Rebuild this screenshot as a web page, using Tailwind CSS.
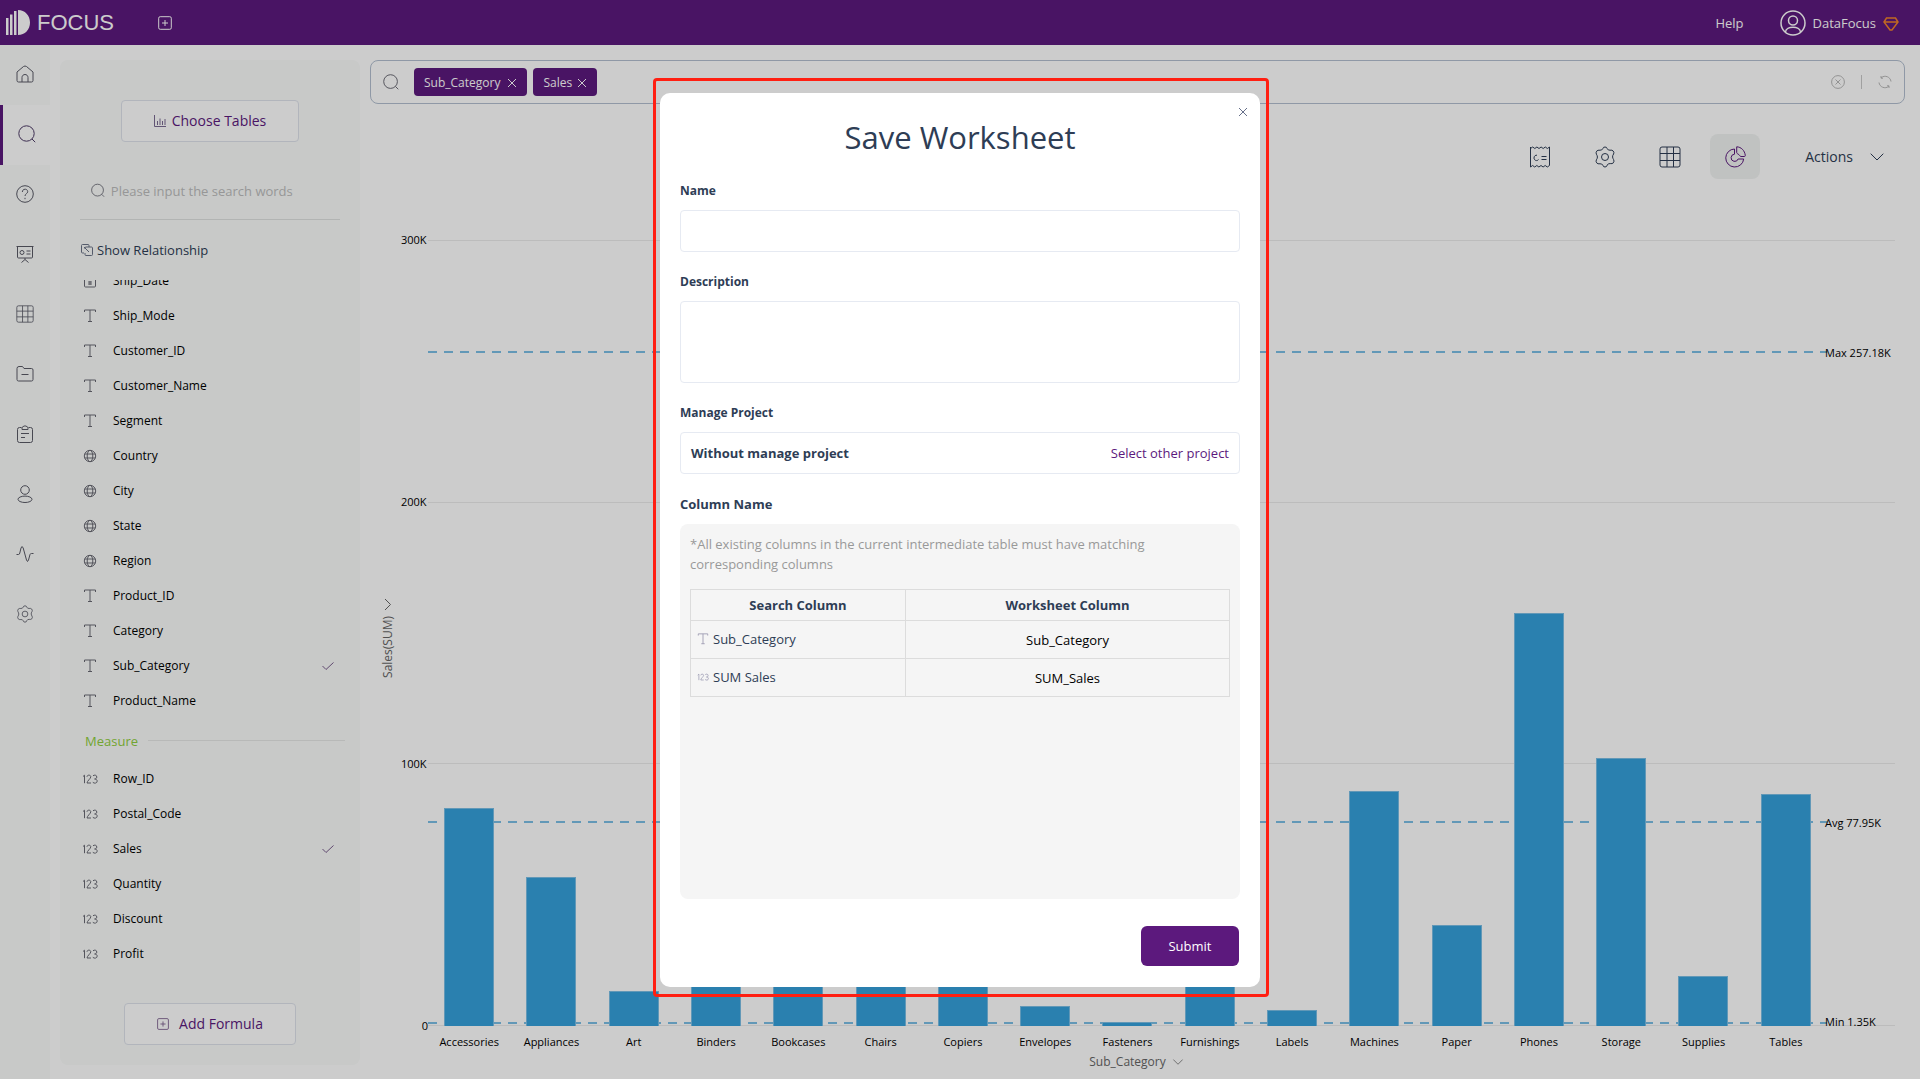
<!DOCTYPE html>
<html lang="en">
<head>
<meta charset="utf-8">
<title>DataFocus</title>
<script src="https://cdn.jsdelivr.net/npm/@tailwindcss/browser@4"></script>
</head>
<body class="min-h-screen flex flex-col bg-white text-[13px] leading-5 text-black font-['Open_Sans','Noto_Sans',sans-serif]">

<svg class="hidden" aria-hidden="true">
  <symbol id="search" viewBox="0 0 18 18"><circle cx="8.5" cy="8.5" r="7.7"/><path d="M14 14l3.2 3.2"/></symbol>
  <symbol id="text" viewBox="0 0 14 14"><path d="M1.500 3V1h11v2M7 1v11.500M5 12.500h4"/></symbol>
  <symbol id="globe" viewBox="0 0 14 14"><circle cx="7" cy="7" r="5.700"/><ellipse cx="7" cy="7" rx="2.800" ry="5.700"/><path d="M1.800 5h10.400M1.800 9h10.400"/></symbol>
  <symbol id="calendar" viewBox="0 0 14 14"><rect x="1.500" y="2.500" width="11" height="10.500" rx="1"/><path d="M4 .5v3M10 .5v3M5 8h4M5 10h4M7 7v4"/></symbol>
  <symbol id="number" viewBox="0 0 16 10"><path d="M1 2.500l1.500-1.300v8M5 2.800c0-2.200 3.800-2.200 3.800 0C8.800 4.500 5 7 5 9h4M11 1.800c1.200-1.200 3.800-.8 3.800 1.200 0 1.500-1.200 2-2.200 2 1.200 0 2.600.6 2.600 2.100 0 2.200-3 2.700-4.400 1.200"/></symbol>
  <symbol id="check" viewBox="0 0 12 8"><path d="M.5 4l3.500 3.500L11.500.5"/></symbol>
  <symbol id="plus" viewBox="0 0 14 14"><rect x=".7" y=".7" width="12.600" height="12.600" rx="1.500"/><path d="M7 4v6M4 7h6"/></symbol>
  <symbol id="gear" viewBox="0 0 22 22"><circle cx="11" cy="11" r="3.500"/><path d="M8.800 2.600Q9.200 1 11 1t2.200 1.600q.8 1.900 2.800 1.600 2.200-.4 3.200.8 1.200 1.600.4 3-1.200 1.600-1 3 .1 1.200 1 2.600.9 1.600-.2 3.200-1.200 1.200-3.200.8-2.200-.3-2.900 1.400Q12.800 21 11 21t-2.200-1.800Q8 17.500 6 17.800q-2.300.4-3.300-.9-1.100-1.500-.3-3.100 1.100-1.500 1-2.800 0-1.300-1-2.800-.8-1.500.3-3.100 1-1.200 3.300-.9 2 .3 2.800-1.600z"/></symbol>
  <symbol id="grid" viewBox="0 0 22 22"><rect x="1" y="1" width="20" height="20" rx="2"/><path d="M1 7.500h20M1 14.500h20M8 1v20M14.500 1v20"/></symbol>
  <symbol id="down" viewBox="0 0 14 8"><path d="M.7.700L7 7 13.300.700"/></symbol>
  <symbol id="cross" viewBox="0 0 10 10"><path d="M1 1l8 8M9 1L1 9"/></symbol>
</svg>

<header class="h-[45px] flex items-center justify-between bg-[#5c197d] text-white pl-1.5 pr-[21px]">
  <div class="flex items-center">
    <svg class="w-6 h-[26px] mr-[7px]" viewBox="0 0 24 26" fill="#fff"><path d="M0 8h2.500v17H0zM4 4.500h2.500V25H4zM8 1h2.500v24H8zM12 0c7 0 12 5.500 12 12.500S19 25 12 25z"/></svg>
    <span class="text-[22px] leading-[30px] font-['Liberation_Sans',sans-serif]">FOCUS</span>
    <button aria-label="New tab" class="ml-11"><svg class="size-3.5 fill-none stroke-current"><use href="#plus"/></svg></button>
  </div>
  <div class="flex items-center">
    <a href="#" class="mr-9">Help</a>
    <svg class="size-[26px] mr-[7px] fill-none stroke-current stroke-[1.5]" viewBox="0 0 26 26"><circle cx="13" cy="13" r="12"/><circle cx="13" cy="10.500" r="4.500"/><path d="M5.500 22c.5-6.500 14.500-6.500 15 0"/></svg>
    <span>DataFocus</span>
    <svg class="w-4 h-3.5 ml-[7px] mt-0.5 fill-none stroke-[#f0832b] stroke-[1.5]" viewBox="0 0 16 14"><path d="M3.500 1h9L15 5l-6 8H7L1 5zM1 5h14"/></svg>
  </div>
</header>

<div class="flex-1 flex">
  <nav class="w-[50px] shrink-0 bg-[#fafcfb] text-[#5a5a66]">
    <a href="#" aria-label="Home" class="h-[60px] pb-0.5 grid place-items-center"><svg class="size-[18px] fill-none stroke-current" viewBox="0 0 18 18"><path d="M1 7l6.500-5.500q1.500-1 3 0L17 7v8.500q0 1.500-1.500 1.500h-13Q1 17 1 15.500zM6 17v-4.500c0-4 6-4 6 0V17"/></svg></a>
    <a href="#" aria-label="Search" class="h-[60px] pb-0.5 grid place-items-center bg-white border-l-3 border-[#5c197d] text-[#4d3a66]"><svg class="size-[18px] fill-none stroke-current"><use href="#search"/></svg></a>
    <a href="#" aria-label="Help" class="h-[60px] pb-0.5 grid place-items-center"><svg class="size-[18px] fill-none stroke-current" viewBox="0 0 18 18"><circle cx="9" cy="9" r="8.300"/><path d="M6.300 7c0-3.700 5.400-3.700 5.400-.3 0 2-2.700 2-2.700 4.300M9 12.800v1.400"/></svg></a>
    <a href="#" aria-label="Boards" class="h-[60px] pb-0.5 grid place-items-center"><svg class="size-[18px] fill-none stroke-current" viewBox="0 0 18 18"><path d="M.5 1.500h17M1.500 1.500V12q0 1 1 1h13q1 0 1-1V1.500M9 13v1.500M5.500 17.500L9 14.500l3.500 3M10.500 6h4M10.500 9h4"/><circle cx="6" cy="7.500" r="2"/></svg></a>
    <a href="#" aria-label="Tables" class="h-[60px] pb-0.5 grid place-items-center"><svg class="size-[18px] fill-none stroke-current"><use href="#grid"/></svg></a>
    <a href="#" aria-label="Projects" class="h-[60px] pb-0.5 grid place-items-center"><svg class="size-[18px] fill-none stroke-current" viewBox="0 0 18 18"><path d="M1 3.500q0-2 2-2h3.500L8 3.500h7.500q1.500 0 1.500 1.500v9.500q0 1.500-1.500 1.500h-13Q1 16 1 14.500zM5.500 9.500h7"/></svg></a>
    <a href="#" aria-label="Tasks" class="h-[60px] pb-0.5 grid place-items-center"><svg class="size-[18px] fill-none stroke-current" viewBox="0 0 18 18"><path d="M5.500 2.500H3.500q-2 0-2 2v11q0 2 2 2h11q2 0 2-2v-11q0-2-2-2h-2M6 4.500V2.500L8 1h2l2 1.500v2zM5 8.500h8M5 12.500h4"/></svg></a>
    <a href="#" aria-label="Users" class="h-[60px] pb-0.5 grid place-items-center"><svg class="size-[18px] fill-none stroke-current" viewBox="0 0 18 18"><circle cx="9" cy="5" r="4.300"/><ellipse cx="9" cy="14.300" rx="7" ry="3.200"/></svg></a>
    <a href="#" aria-label="Activity" class="h-[60px] pb-0.5 grid place-items-center"><svg class="size-[18px] fill-none stroke-current" viewBox="0 0 18 18"><path d="M.5 9.500h2q1 0 1.300-1.500L5 3Q6 0 7.200 3l3.300 12q1 3 2 0L14 9.500q.3-1 1.500-1h2"/></svg></a>
    <a href="#" aria-label="Settings" class="h-[60px] pb-0.5 grid place-items-center"><svg class="size-[18px] fill-none stroke-current"><use href="#gear"/></svg></a>
  </nav>

  <aside class="w-[300px] shrink-0 ml-2.5 mt-[15px] mb-3.5 pt-10 pb-5 flex flex-col rounded-lg bg-[#fafcfb]">
    <button class="self-center w-[178px] h-[42px] flex items-center justify-center gap-1.5 rounded border border-[#dfe3ec] bg-white text-[14px] text-[#5c197d]">
      <svg class="size-3 fill-none stroke-[#7a6a92]" viewBox="0 0 12 12"><path d="M.5 0v11.500H12M3.500 10V6M6 10V3.500M8.500 10V6M11 10V4"/></svg>Choose Tables</button>
    <label class="mt-6 mx-5 h-[54px] pl-[11px] pb-1 flex items-center gap-1.5 border-b border-[#dfe1e0]">
      <svg class="size-[15px] fill-none stroke-[#5a5a66]"><use href="#search"/></svg>
      <input type="text" placeholder="Please input the search words" class="w-full text-[13px] outline-none placeholder:text-[#bdbdbd]">
    </label>
    <a href="#" class="mt-5 ml-[21px] flex items-center gap-1 text-[#2e3d55]">
      <svg class="size-3 fill-none stroke-[#6b7286]" viewBox="0 0 12 12"><path d="M3 9H1.500Q.5 9 .5 8V1.500q0-1 1-1H7q1 0 1 1V3M4 5V4q0-1 1-1h5.500q1 0 1 1v6.500q0 1-1 1H5q-1 0-1-1V9M3 3l5 5"/></svg>Show Relationship</a>
    <ul class="mt-5 overflow-hidden text-[12px]">
      <li class="-mt-[17px] h-[35px] pl-[23px] pr-[26px] flex items-center"><svg class="size-3.5 mr-4 fill-none stroke-[#6a6a74]"><use href="#calendar"/></svg>Ship_Date</li>
      <li class="h-[35px] pl-[23px] pr-[26px] flex items-center"><svg class="size-3.5 mr-4 fill-none stroke-[#6a6a74]"><use href="#text"/></svg>Ship_Mode</li>
      <li class="h-[35px] pl-[23px] pr-[26px] flex items-center"><svg class="size-3.5 mr-4 fill-none stroke-[#6a6a74]"><use href="#text"/></svg>Customer_ID</li>
      <li class="h-[35px] pl-[23px] pr-[26px] flex items-center"><svg class="size-3.5 mr-4 fill-none stroke-[#6a6a74]"><use href="#text"/></svg>Customer_Name</li>
      <li class="h-[35px] pl-[23px] pr-[26px] flex items-center"><svg class="size-3.5 mr-4 fill-none stroke-[#6a6a74]"><use href="#text"/></svg>Segment</li>
      <li class="h-[35px] pl-[23px] pr-[26px] flex items-center"><svg class="size-3.5 mr-4 fill-none stroke-[#6a6a74]"><use href="#globe"/></svg>Country</li>
      <li class="h-[35px] pl-[23px] pr-[26px] flex items-center"><svg class="size-3.5 mr-4 fill-none stroke-[#6a6a74]"><use href="#globe"/></svg>City</li>
      <li class="h-[35px] pl-[23px] pr-[26px] flex items-center"><svg class="size-3.5 mr-4 fill-none stroke-[#6a6a74]"><use href="#globe"/></svg>State</li>
      <li class="h-[35px] pl-[23px] pr-[26px] flex items-center"><svg class="size-3.5 mr-4 fill-none stroke-[#6a6a74]"><use href="#globe"/></svg>Region</li>
      <li class="h-[35px] pl-[23px] pr-[26px] flex items-center"><svg class="size-3.5 mr-4 fill-none stroke-[#6a6a74]"><use href="#text"/></svg>Product_ID</li>
      <li class="h-[35px] pl-[23px] pr-[26px] flex items-center"><svg class="size-3.5 mr-4 fill-none stroke-[#6a6a74]"><use href="#text"/></svg>Category</li>
      <li class="h-[35px] pl-[23px] pr-[26px] flex items-center"><svg class="size-3.5 mr-4 fill-none stroke-[#6a6a74]"><use href="#text"/></svg>Sub_Category<svg class="w-3 h-2 ml-auto fill-none stroke-[#7a5c8c]"><use href="#check"/></svg></li>
      <li class="h-[35px] pl-[23px] pr-[26px] flex items-center"><svg class="size-3.5 mr-4 fill-none stroke-[#6a6a74]"><use href="#text"/></svg>Product_Name</li>
    </ul>
    <div class="h-[43px] pt-0.5 ml-[25px] mr-[15px] flex items-center gap-2.5 text-[13px] text-[#8fce3c] after:h-px after:flex-1 after:bg-[#e6e8e7]">Measure</div>
    <ul class="text-[12px]">
      <li class="h-[35px] pl-[22px] pr-[26px] flex items-center"><svg class="w-4 h-2.5 mr-[15px] fill-none stroke-[#6a6a74]"><use href="#number"/></svg>Row_ID</li>
      <li class="h-[35px] pl-[22px] pr-[26px] flex items-center"><svg class="w-4 h-2.5 mr-[15px] fill-none stroke-[#6a6a74]"><use href="#number"/></svg>Postal_Code</li>
      <li class="h-[35px] pl-[22px] pr-[26px] flex items-center"><svg class="w-4 h-2.5 mr-[15px] fill-none stroke-[#6a6a74]"><use href="#number"/></svg>Sales<svg class="w-3 h-2 ml-auto fill-none stroke-[#7a5c8c]"><use href="#check"/></svg></li>
      <li class="h-[35px] pl-[22px] pr-[26px] flex items-center"><svg class="w-4 h-2.5 mr-[15px] fill-none stroke-[#6a6a74]"><use href="#number"/></svg>Quantity</li>
      <li class="h-[35px] pl-[22px] pr-[26px] flex items-center"><svg class="w-4 h-2.5 mr-[15px] fill-none stroke-[#6a6a74]"><use href="#number"/></svg>Discount</li>
      <li class="h-[35px] pl-[22px] pr-[26px] flex items-center"><svg class="w-4 h-2.5 mr-[15px] fill-none stroke-[#6a6a74]"><use href="#number"/></svg>Profit</li>
    </ul>
    <button class="mt-auto self-center w-[172px] h-[42px] flex items-center justify-center gap-2.5 rounded border border-[#dfe3ec] bg-white text-[14px] text-[#5c197d]">
      <svg class="size-3 fill-none stroke-[#7a5c8c]"><use href="#plus"/></svg>Add Formula</button>
  </aside>

  <main class="flex-1 min-w-0 flex flex-col ml-2.5 mt-[15px]">
    <div class="mr-[15px] h-11 pl-3 pr-3 flex items-center rounded-lg border border-[#b3bfd0]">
      <svg class="size-4 mr-[15px] fill-none stroke-[#5a5a66]"><use href="#search"/></svg>
      <span class="h-7 px-2.5 mr-1.5 pt-0.5 flex items-center gap-[7px] rounded bg-[#5c197d] text-[12px] text-white">Sub_Category<button aria-label="Remove Sub_Category"><svg class="size-2.5 fill-none stroke-current"><use href="#cross"/></svg></button></span>
      <span class="h-7 px-2.5 pt-0.5 flex items-center gap-[5px] rounded bg-[#5c197d] text-[12px] text-white">Sales<button aria-label="Remove Sales"><svg class="size-2.5 fill-none stroke-current"><use href="#cross"/></svg></button></span>
      <button aria-label="Clear" class="ml-auto"><svg class="size-3.5 fill-none stroke-[#b8b8b8]" viewBox="0 0 14 14"><circle cx="7" cy="7" r="6.400"/><path d="M4.500 4.500l5 5M9.500 4.500l-5 5"/></svg></button>
      <span class="w-px h-3.5 mx-4 bg-[#c8c8c8]"></span>
      <button aria-label="Refresh"><svg class="size-3.5 fill-none stroke-[#b8b8b8]" viewBox="0 0 14 14"><path d="M3 2.800C7-.5 12.500 2 13 6.500M11 11.200C7 14.500 1.500 12 1 7.500M3 1v2.200h2M11 13v-2.200H9"/></svg></button>
    </div>

    <div class="mt-[30px] mr-9 h-[45px] flex items-center justify-end text-[#2e3d55]">
      <button aria-label="Formula" class="mr-[43px]"><svg class="size-[22px] fill-none stroke-current" viewBox="0 0 22 22"><path d="M1.500 1v20l2.100-1.500L5.700 21l2.100-1.500L9.900 21l2.100-1.500 2.100 1.500 2.100-1.500 2.100 1.500 2.200-1.500V1l-2.100 1.500L16.300 1l-2.100 1.500L12.100 1 10 2.500 7.900 1 5.800 2.500 3.700 1 1.500 2.500M9.500 13.500c-1.200 2-4.500 1-4.500-1.500 0-2 1.500-3 3-2.800M12.500 10.500h5M12.500 13.500h5"/></svg></button>
      <button aria-label="Settings" class="mr-[43px]"><svg class="size-[22px] fill-none stroke-current"><use href="#gear"/></svg></button>
      <button aria-label="Table" class="mr-[29px]"><svg class="size-[22px] fill-none stroke-current"><use href="#grid"/></svg></button>
      <button aria-label="Chart" class="w-[50px] h-[45px] grid place-items-center rounded-lg bg-[#f1f3f2] text-[#5c197d]"><svg class="size-[22px] fill-none stroke-current" viewBox="0 0 22 22"><path d="M10.500 3v5.200a3.600 3.600 0 1 0 3.600 4.800h5.600A9 9 0 1 1 10.500 3zM12.700 .8c4.500.2 8 3.700 8.600 8.700q0 1-1 1H17q-.8 0-1.200-.8-.7-1.200-2.300-2-.8-.4-.8-1.200z"/></svg></button>
      <button class="ml-[45px] flex items-center gap-[17px] text-[14px]">Actions<svg class="w-3.5 h-2 fill-none stroke-current"><use href="#down"/></svg></button>
    </div>

    <section class="flex-1 min-h-[500px] mt-[61px] grid grid-cols-[58px_1fr] grid-rows-[1fr_53px] text-[11px]">
      <div class="flex">
        <div class="w-[31px] pl-1 pt-2.5 flex flex-col items-center justify-center gap-1 text-[12px] text-[#666]">
          <svg class="w-2 h-3.5 fill-none stroke-current" viewBox="0 0 8 14"><path d="M1 1l5.500 5.500L1 12"/></svg>
          <span class="[writing-mode:vertical-rl] rotate-180">Sales(SUM)</span>
        </div>
        <div class="-my-2.5 flex-1 flex flex-col justify-between"><span>300K</span><span>200K</span><span>100K</span><span class="text-right">0</span></div>
      </div>
      <div class="relative mr-[25px]">
        <div class="absolute inset-0 flex flex-col justify-between *:h-px *:bg-[#ebebeb]"><i></i><i></i><i></i><i></i></div>
        <div class="absolute inset-y-0 left-0 right-[68px]">
          <div class="absolute inset-x-0 h-0.5 bg-[repeating-linear-gradient(90deg,#7bbfe5_0_9px,transparent_9px_16px)]" style="bottom:85.6%"></div>
          <div class="absolute inset-x-0 h-0.5 bg-[repeating-linear-gradient(90deg,#7bbfe5_0_9px,transparent_9px_16px)]" style="bottom:25.8%"></div>
          <div class="absolute inset-x-0 h-0.5 bg-[repeating-linear-gradient(90deg,#7bbfe5_0_9px,transparent_9px_16px)]" style="bottom:0.3%"></div>
          <span class="absolute left-full -ml-0.5 -mb-2.5 whitespace-nowrap" style="bottom:85.6%">Max 257.18K</span>
          <span class="absolute left-full -ml-0.5 -mb-2.5 whitespace-nowrap" style="bottom:25.8%">Avg 77.95K</span>
          <span class="absolute left-full -ml-0.5 -mb-2.5 whitespace-nowrap" style="bottom:0.5%">Min 1.35K</span>
          <div class="absolute inset-0 flex items-end justify-around *:w-[50px] *:bg-[#35a1db] *:border *:border-b-0 *:border-[#7bbfe5]">
            <i style="height:27.8%"></i><i style="height:18.9%"></i><i style="height:4.4%"></i><i style="height:48%"></i><i style="height:29%"></i><i style="height:85.6%"></i><i style="height:38%"></i><i style="height:2.6%"></i><i style="height:0.5%"></i><i style="height:22%"></i><i style="height:2%"></i><i style="height:29.9%"></i><i style="height:12.9%"></i><i style="height:52.5%"></i><i style="height:34.1%"></i><i style="height:6.3%"></i><i style="height:29.5%"></i>
          </div>
        </div>
      </div>
      <div></div>
      <div class="mr-[25px] pt-1.5 flex flex-col">
        <div class="mr-[68px] grid grid-cols-17 text-center"><span>Accessories</span><span>Appliances</span><span>Art</span><span>Binders</span><span>Bookcases</span><span>Chairs</span><span>Copiers</span><span>Envelopes</span><span>Fasteners</span><span>Furnishings</span><span>Labels</span><span>Machines</span><span>Paper</span><span>Phones</span><span>Storage</span><span>Supplies</span><span>Tables</span></div>
        <button class="mr-[50px] self-center flex items-center gap-1.5 text-[12px] text-[#666]">Sub_Category<svg class="w-3 h-1.5 fill-none stroke-current" viewBox="0 0 14 8"><use href="#down"/></svg></button>
      </div>
    </section>
  </main>
</div>

<div class="fixed inset-0 pt-[78px] pl-0.5 flex items-start justify-center bg-black/20">
  <div class="rounded border-3 border-[#ff1f12] pt-3 pb-[7px] pl-1 pr-1.5">
    <form role="dialog" aria-labelledby="dialog-title" class="relative w-[600px] px-5 pt-6 pb-[21px] flex flex-col rounded-[10px] bg-white text-[#2e3d55]">
      <button type="button" aria-label="Close" class="absolute top-3.5 right-3"><svg class="size-2.5 fill-none stroke-[#67708a]"><use href="#cross"/></svg></button>
      <h1 id="dialog-title" class="text-center text-[31px] leading-10">Save Worksheet</h1>
      <label for="name" class="mt-6 font-bold text-[12px]">Name</label>
      <input id="name" type="text" class="mt-[9px] h-[42px] px-2.5 rounded-sm border border-[#e6eaf2] outline-none">
      <label for="description" class="mt-5 font-bold text-[12px]">Description</label>
      <textarea id="description" class="mt-[9px] h-[82px] p-2.5 resize-none rounded-sm border border-[#e6eaf2] outline-none"></textarea>
      <h2 class="mt-5 font-bold text-[12px]">Manage Project</h2>
      <div class="mt-[9px] h-[42px] px-2.5 flex items-center justify-between rounded-sm border border-[#e6eaf2]"><span class="font-bold">Without manage project</span><a href="#" class="text-[#5c197d]">Select other project</a></div>
      <h2 class="mt-5 font-bold">Column Name</h2>
      <div class="mt-2.5 h-[375px] p-2.5 rounded-lg bg-[#f5f5f5]">
        <p class="text-[#999]">*All existing columns in the current intermediate table must have matching corresponding columns</p>
        <table class="mt-[15px] w-full border-collapse *:*:*:border *:*:*:border-[#dcdcdc]">
          <thead><tr class="h-[31px]"><th class="w-[215px]">Search Column</th><th>Worksheet Column</th></tr></thead>
          <tbody>
            <tr class="h-[38px]"><td class="px-1.5 pb-0.5"><span class="flex items-center gap-1"><svg class="size-3 fill-none stroke-[#9a98b0]"><use href="#text"/></svg>Sub_Category</span></td><td class="text-center text-black">Sub_Category</td></tr>
            <tr class="h-[38px]"><td class="px-1.5 pb-0.5"><span class="flex items-center gap-1"><svg class="w-3 h-2 fill-none stroke-[#9a98b0]"><use href="#number"/></svg>SUM Sales</span></td><td class="text-center text-black">SUM_Sales</td></tr>
          </tbody>
        </table>
      </div>
      <button type="submit" class="mt-[27px] mr-px self-end w-[98px] h-10 rounded-md bg-[#5c197d] text-white">Submit</button>
    </form>
  </div>
</div>
</body>
</html>
